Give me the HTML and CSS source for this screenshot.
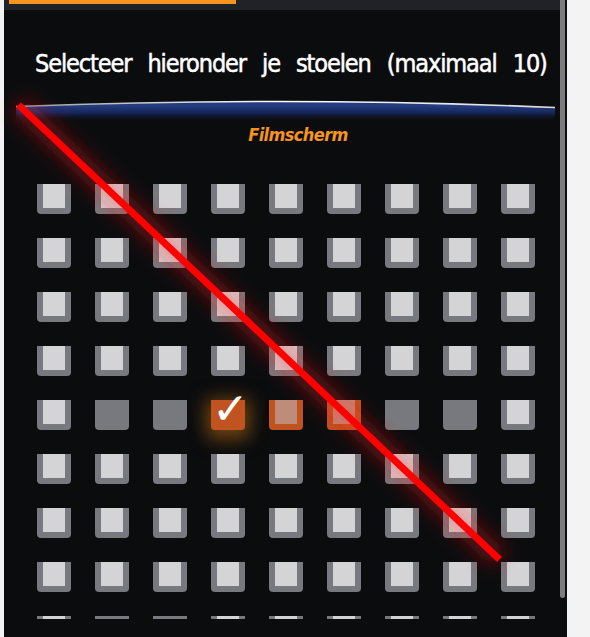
FILE: index.html
```html
<!DOCTYPE html>
<html lang="nl">
<head>
<meta charset="utf-8">
<title>Stoelen selecteren</title>
<link rel="stylesheet" href="styles.css">
</head>
<body>
<div class="app">
  <div class="main">
    <div class="tabs"><div class="tab-active"></div></div>
    <h1 class="title">Selecteer hieronder je stoelen (maximaal 10)</h1>
    <svg class="screen" width="539" height="25" viewBox="0 0 539 25">
      <defs>
        <linearGradient id="glowfill" x1="0" y1="0" x2="0" y2="1">
          <stop offset="0.2" stop-color="#243c82"/>
          <stop offset="0.55" stop-color="#16265a"/>
          <stop offset="1" stop-color="#0b0c0e" stop-opacity="0"/>
        </linearGradient>
        <linearGradient id="edge" x1="0" y1="0" x2="1" y2="0">
          <stop offset="0" stop-color="#9c9c9c"/>
          <stop offset="0.5" stop-color="#ffffff"/>
          <stop offset="1" stop-color="#d8d8d8"/>
        </linearGradient>
      </defs>
      <path d="M0,9.5 Q274,-1 539,10.5 L539,25 L0,25 Z" fill="url(#glowfill)"/>
      <path d="M0,9.5 Q274,-1 539,10.5" fill="none" stroke="url(#edge)" stroke-width="1.6"/>
    </svg>
    <div class="screen-label">Filmscherm</div>
    <div class="seat-area">
      <div class="seats">
        <div class="seat"></div><div class="seat"></div><div class="seat"></div><div class="seat"></div><div class="seat"></div><div class="seat"></div><div class="seat"></div><div class="seat"></div><div class="seat"></div>
        <div class="seat"></div><div class="seat"></div><div class="seat"></div><div class="seat"></div><div class="seat"></div><div class="seat"></div><div class="seat"></div><div class="seat"></div><div class="seat"></div>
        <div class="seat"></div><div class="seat"></div><div class="seat"></div><div class="seat"></div><div class="seat"></div><div class="seat"></div><div class="seat"></div><div class="seat"></div><div class="seat"></div>
        <div class="seat"></div><div class="seat"></div><div class="seat"></div><div class="seat"></div><div class="seat"></div><div class="seat"></div><div class="seat"></div><div class="seat"></div><div class="seat"></div>
        <div class="seat"></div><div class="seat taken"></div><div class="seat taken"></div><div class="seat selected"><span class="check">✓</span></div><div class="seat reserved"></div><div class="seat reserved"></div><div class="seat taken"></div><div class="seat taken"></div><div class="seat"></div>
        <div class="seat"></div><div class="seat"></div><div class="seat"></div><div class="seat"></div><div class="seat"></div><div class="seat"></div><div class="seat"></div><div class="seat"></div><div class="seat"></div>
        <div class="seat"></div><div class="seat"></div><div class="seat"></div><div class="seat"></div><div class="seat"></div><div class="seat"></div><div class="seat"></div><div class="seat"></div><div class="seat"></div>
        <div class="seat"></div><div class="seat"></div><div class="seat"></div><div class="seat"></div><div class="seat"></div><div class="seat"></div><div class="seat"></div><div class="seat"></div><div class="seat"></div>
        <div class="seat"></div><div class="seat taken"></div><div class="seat taken"></div><div class="seat"></div><div class="seat"></div><div class="seat"></div><div class="seat"></div><div class="seat"></div><div class="seat"></div>
      </div>
    </div>
  </div>
  <div class="scroll"><div class="thumb"></div></div>
</div>
<svg class="strike" width="590" height="637" viewBox="0 0 590 637">
  <defs>
    <filter id="blur" x="-20%" y="-20%" width="140%" height="140%">
      <feGaussianBlur stdDeviation="9"/>
    </filter>
  </defs>
  <line x1="18.5" y1="105" x2="499.5" y2="559.5" stroke="#ff1010" stroke-opacity="0.35" stroke-width="22" filter="url(#blur)"/>
  <line x1="18.5" y1="105" x2="499.5" y2="559.5" stroke="#ff0000" stroke-width="7"/>
</svg>
</body>
</html>
```

FILE: styles.css
```css
html, body {
  margin: 0;
  padding: 0;
}

body {
  background: #f3f3f3;
  width: 590px;
  height: 637px;
  overflow: hidden;
  position: relative;
}

.app {
  margin-left: 4px;
  width: 563px;
  height: 637px;
  display: flex;
  background: #0b0c0e;
}

.main {
  width: 556px;
  flex: none;
  overflow: hidden;
}

.tabs {
  height: 10px;
  background: #202228;
  padding-left: 5px;
}

.tab-active {
  width: 227px;
  height: 4px;
  background: #f7941d;
}

.title {
  margin: 39px 0 0;
  padding-left: 31px;
  height: 30px;
  line-height: 30px;
  font-family: "DejaVu Sans Condensed", "DejaVu Sans", sans-serif;
  font-weight: normal;
  font-size: 25px;
  letter-spacing: -1.1px;
  word-spacing: 10px;
  color: #ffffff;
  -webkit-text-stroke: 0.5px #ffffff;
  white-space: nowrap;
}

.screen {
  display: block;
  margin: 18px 0 0 12px;
}

.screen-label {
  margin-top: 2px;
  height: 22px;
  line-height: 22px;
  padding-left: 32px;
  text-align: center;
  font-family: "DejaVu Sans Condensed", "DejaVu Sans", sans-serif;
  font-style: italic;
  font-weight: bold;
  font-size: 18px;
  letter-spacing: -0.6px;
  color: #f7941d;
}

.seat-area {
  margin-top: 38px;
  height: 435px;
  overflow: hidden;
  padding-left: 33px;
}

.seats {
  display: grid;
  grid-template-columns: repeat(9, 34px);
  column-gap: 24px;
  row-gap: 24px;
}

.seat {
  width: 34px;
  height: 30px;
  box-sizing: border-box;
  padding: 0 6px;
  background: #78797e;
  border-radius: 0 0 4px 4px;
}

.seat::before {
  content: "";
  display: block;
  height: 24px;
  background: #d4d4d6;
}

.seat.taken::before {
  display: none;
}

.seat.reserved {
  background: #c0531f;
}

.seat.reserved::before {
  background: #c08c7a;
}

.seat.selected {
  background: #c0531f;
  display: flex;
  justify-content: center;
  align-items: flex-start;
  box-shadow: 0 4px 18px 5px rgba(214, 125, 20, 0.5);
}

.seat.selected::before {
  display: none;
}

.check {
  display: block;
  margin: -13px 0 0 5px;
  line-height: 44px;
  font-family: "DejaVu Sans", sans-serif;
  font-size: 44px;
  color: #ffffff;
}

.scroll {
  width: 7px;
  flex: none;
}

.thumb {
  width: 5px;
  height: 598px;
  background: #7c7c80;
  border-radius: 0 0 3px 3px;
}

.strike {
  position: absolute;
  top: 0;
  left: 0;
  pointer-events: none;
}
```
